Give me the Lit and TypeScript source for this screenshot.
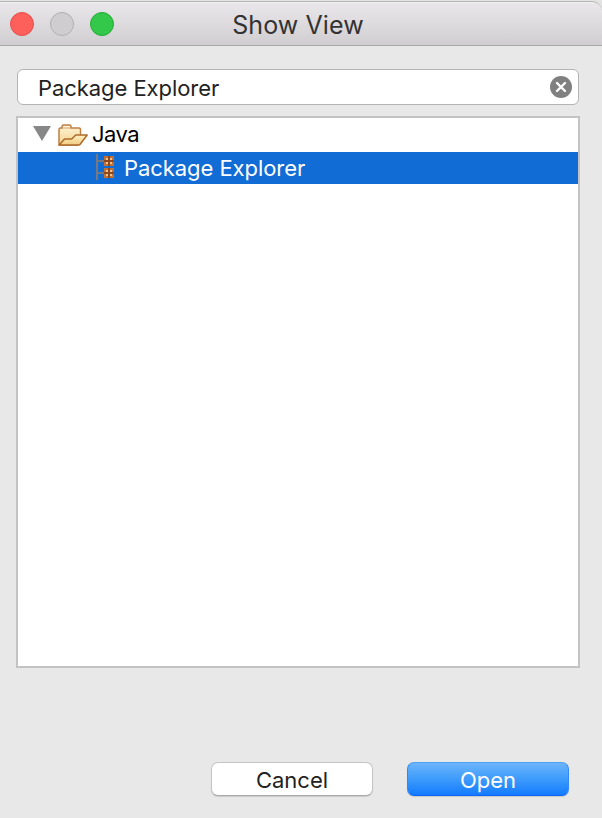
import { LitElement, html, css } from "lit";
import { customElement } from "lit/decorators.js";

@customElement("folder-icon")
class FolderIcon extends LitElement {
  static styles = css`:host, svg { display: block; width: 32px; height: 24px; }`;
  render() {
    return html`<svg viewBox="0 0 32 24">
      <defs>
        <linearGradient id="back" x2="0" y2="1"><stop stop-color="#fff3d8" /><stop offset="1" stop-color="#f3d38d" /></linearGradient>
        <linearGradient id="front" x2="0" y2="1"><stop stop-color="#fff0c4" /><stop offset="1" stop-color="#efcb80" /></linearGradient>
      </defs>
      <path d="M2 22V6.5Q2 5 3.5 5H5V3.5Q5 2 6.5 2h6Q14 2 14 3.5V5h8Q23.5 5 23.5 6.5V14L21 22Z" fill="url(#back)" stroke="#bd7f42" stroke-width="1.5" />
      <path d="M5.5 5h8" stroke="#d6a574" stroke-width="1" />
      <path d="M2.2 22 7.5 16h7.2l4-4H30.2L23.2 21.2Q22.5 22 21.5 22Z" fill="url(#front)" stroke="#ae6b2b" stroke-width="1.5" stroke-linejoin="round" />
    </svg>`;
  }
}

@customElement("package-icon")
class PackageIcon extends LitElement {
  static styles = css`:host, svg { display: block; width: 20px; height: 28px; }`;
  render() {
    return html`<svg viewBox="0 0 20 28" shape-rendering="crispEdges">
      <path d="M0 1h2v26H0zM2 7h6v2H2zM2 19h6v2H2z" fill="#737982" />
      <path d="M8 3h10v10H8zM8 15h10v10H8z" fill="#c06f35" />
      <path d="M12 3h2v10h-2zM8 7h10v2H8zM12 15h2v10h-2zM8 19h10v2H8z" fill="#8f481e" />
      <path d="M10 5h2v2h-2zM14 5h2v2h-2zM10 9h2v2h-2zM14 9h2v2h-2zM10 17h2v2h-2zM14 17h2v2h-2zM10 21h2v2h-2zM14 21h2v2h-2z" fill="#f0c48e" />
    </svg>`;
  }
}

@customElement("app-root")
class AppRoot extends LitElement {
  static styles = css`
    * { box-sizing: border-box; }
    :host { display: block; height: 818px; overflow: hidden; font: 22px/32px Inter, "Liberation Sans", sans-serif; color: #262626; background: #e8e8e8; }
    .window { height: 100%; display: flex; flex-direction: column; }
    .titlebar { flex: none; height: 46px; border-top: 1px solid #e3e3e3; background: #e3e3e3; }
    .chrome { height: 45px; border-top: 1px solid #b6b8b5; border-bottom: 1px solid #a9a9a9; border-radius: 0 10px 0 0; background: linear-gradient(#f3f2f3 0, #e8e6e8 2px, #d1ced1 100%); display: grid; grid-template-columns: 1fr auto 1fr; align-items: center; padding-right: 6px; }
    .lights { display: flex; gap: 16px; padding-left: 10px; }
    .light { width: 24px; height: 24px; border-radius: 50%; border: 1px solid; }
    .close { background: #fd605b; border-color: #e34f4d; }
    .minimize { background: #cfcdcf; border-color: #b1afb1; }
    .zoom { background: #34c84a; border-color: #25aa37; }
    h1 { margin: 0; padding-top: 2px; font-size: 25px; line-height: 32px; font-weight: 400; color: #333; letter-spacing: 0.1px; white-space: nowrap; }
    .body { flex: 1; display: flex; flex-direction: column; padding: 23px 22px 22px 16px; }
    .search { height: 36px; margin: 0 1px; padding: 0 6px 0 20px; border: 1px solid #b4b4b4; border-radius: 6px; background: #fff; display: flex; align-items: center; justify-content: space-between; color: #222; }
    .search span { padding-top: 2px; }
    .search svg { width: 22px; height: 22px; display: block; }
    .tree { height: 552px; margin-top: 11px; border: 2px solid #c3c3c3; background: #fff; color: #000; }
    .row { height: 32px; display: flex; align-items: center; white-space: nowrap; }
    .folder { height: 34px; padding-left: 15px; }
    .folder span { padding-bottom: 2px; letter-spacing: -0.5px; }
    .arrow { width: 18px; height: 15px; margin-right: 6px; margin-top: -3px; }
    .folder folder-icon { margin: 0 3px 0 0; }
    .selected { background: #116cd6; color: #fff; padding-left: 78px; gap: 8px; }
    .selected package-icon { margin-top: -2px; }
    .actions { margin-top: auto; padding-right: 11px; display: flex; justify-content: flex-end; gap: 34px; }
    button { width: 162px; height: 34px; padding: 2px 0 0; border: 1px solid #c5c5c5; border-bottom-color: #aaa; border-radius: 7px; background: #fff; color: #222; font: inherit; line-height: 30px; box-shadow: 0 1px 1px #0002; }
    .open { background: linear-gradient(#6cb5fa, #3f9cfb 48%, #147bff); border-color: #4ca1f8 #3189f8 #0d66f4; color: #fff; }
    .label { letter-spacing: -0.06px; }
  `;
  render() {
    return html`<div class="window">
      <header class="titlebar"><div class="chrome">
        <div class="lights"><div class="light close"></div><div class="light minimize"></div><div class="light zoom"></div></div>
        <h1>Show View</h1>
      </div></header>
      <main class="body">
        <div class="search"><span class="label">Package Explorer</span>
          <svg viewBox="0 0 22 22"><circle cx="11" cy="11" r="11" fill="#808080" /><path d="M7 7l8 8M15 7l-8 8" stroke="#fff" stroke-width="2.4" stroke-linecap="round" /></svg>
        </div>
        <div class="tree">
          <div class="row folder"><svg class="arrow" viewBox="0 0 18 15"><path d="M0 0h18L9 15z" fill="#878787" /></svg><folder-icon></folder-icon><span>Java</span></div>
          <div class="row selected"><package-icon></package-icon><span class="label">Package Explorer</span></div>
        </div>
        <div class="actions"><button>Cancel</button><button class="open">Open</button></div>
      </main>
    </div>`;
  }
}
